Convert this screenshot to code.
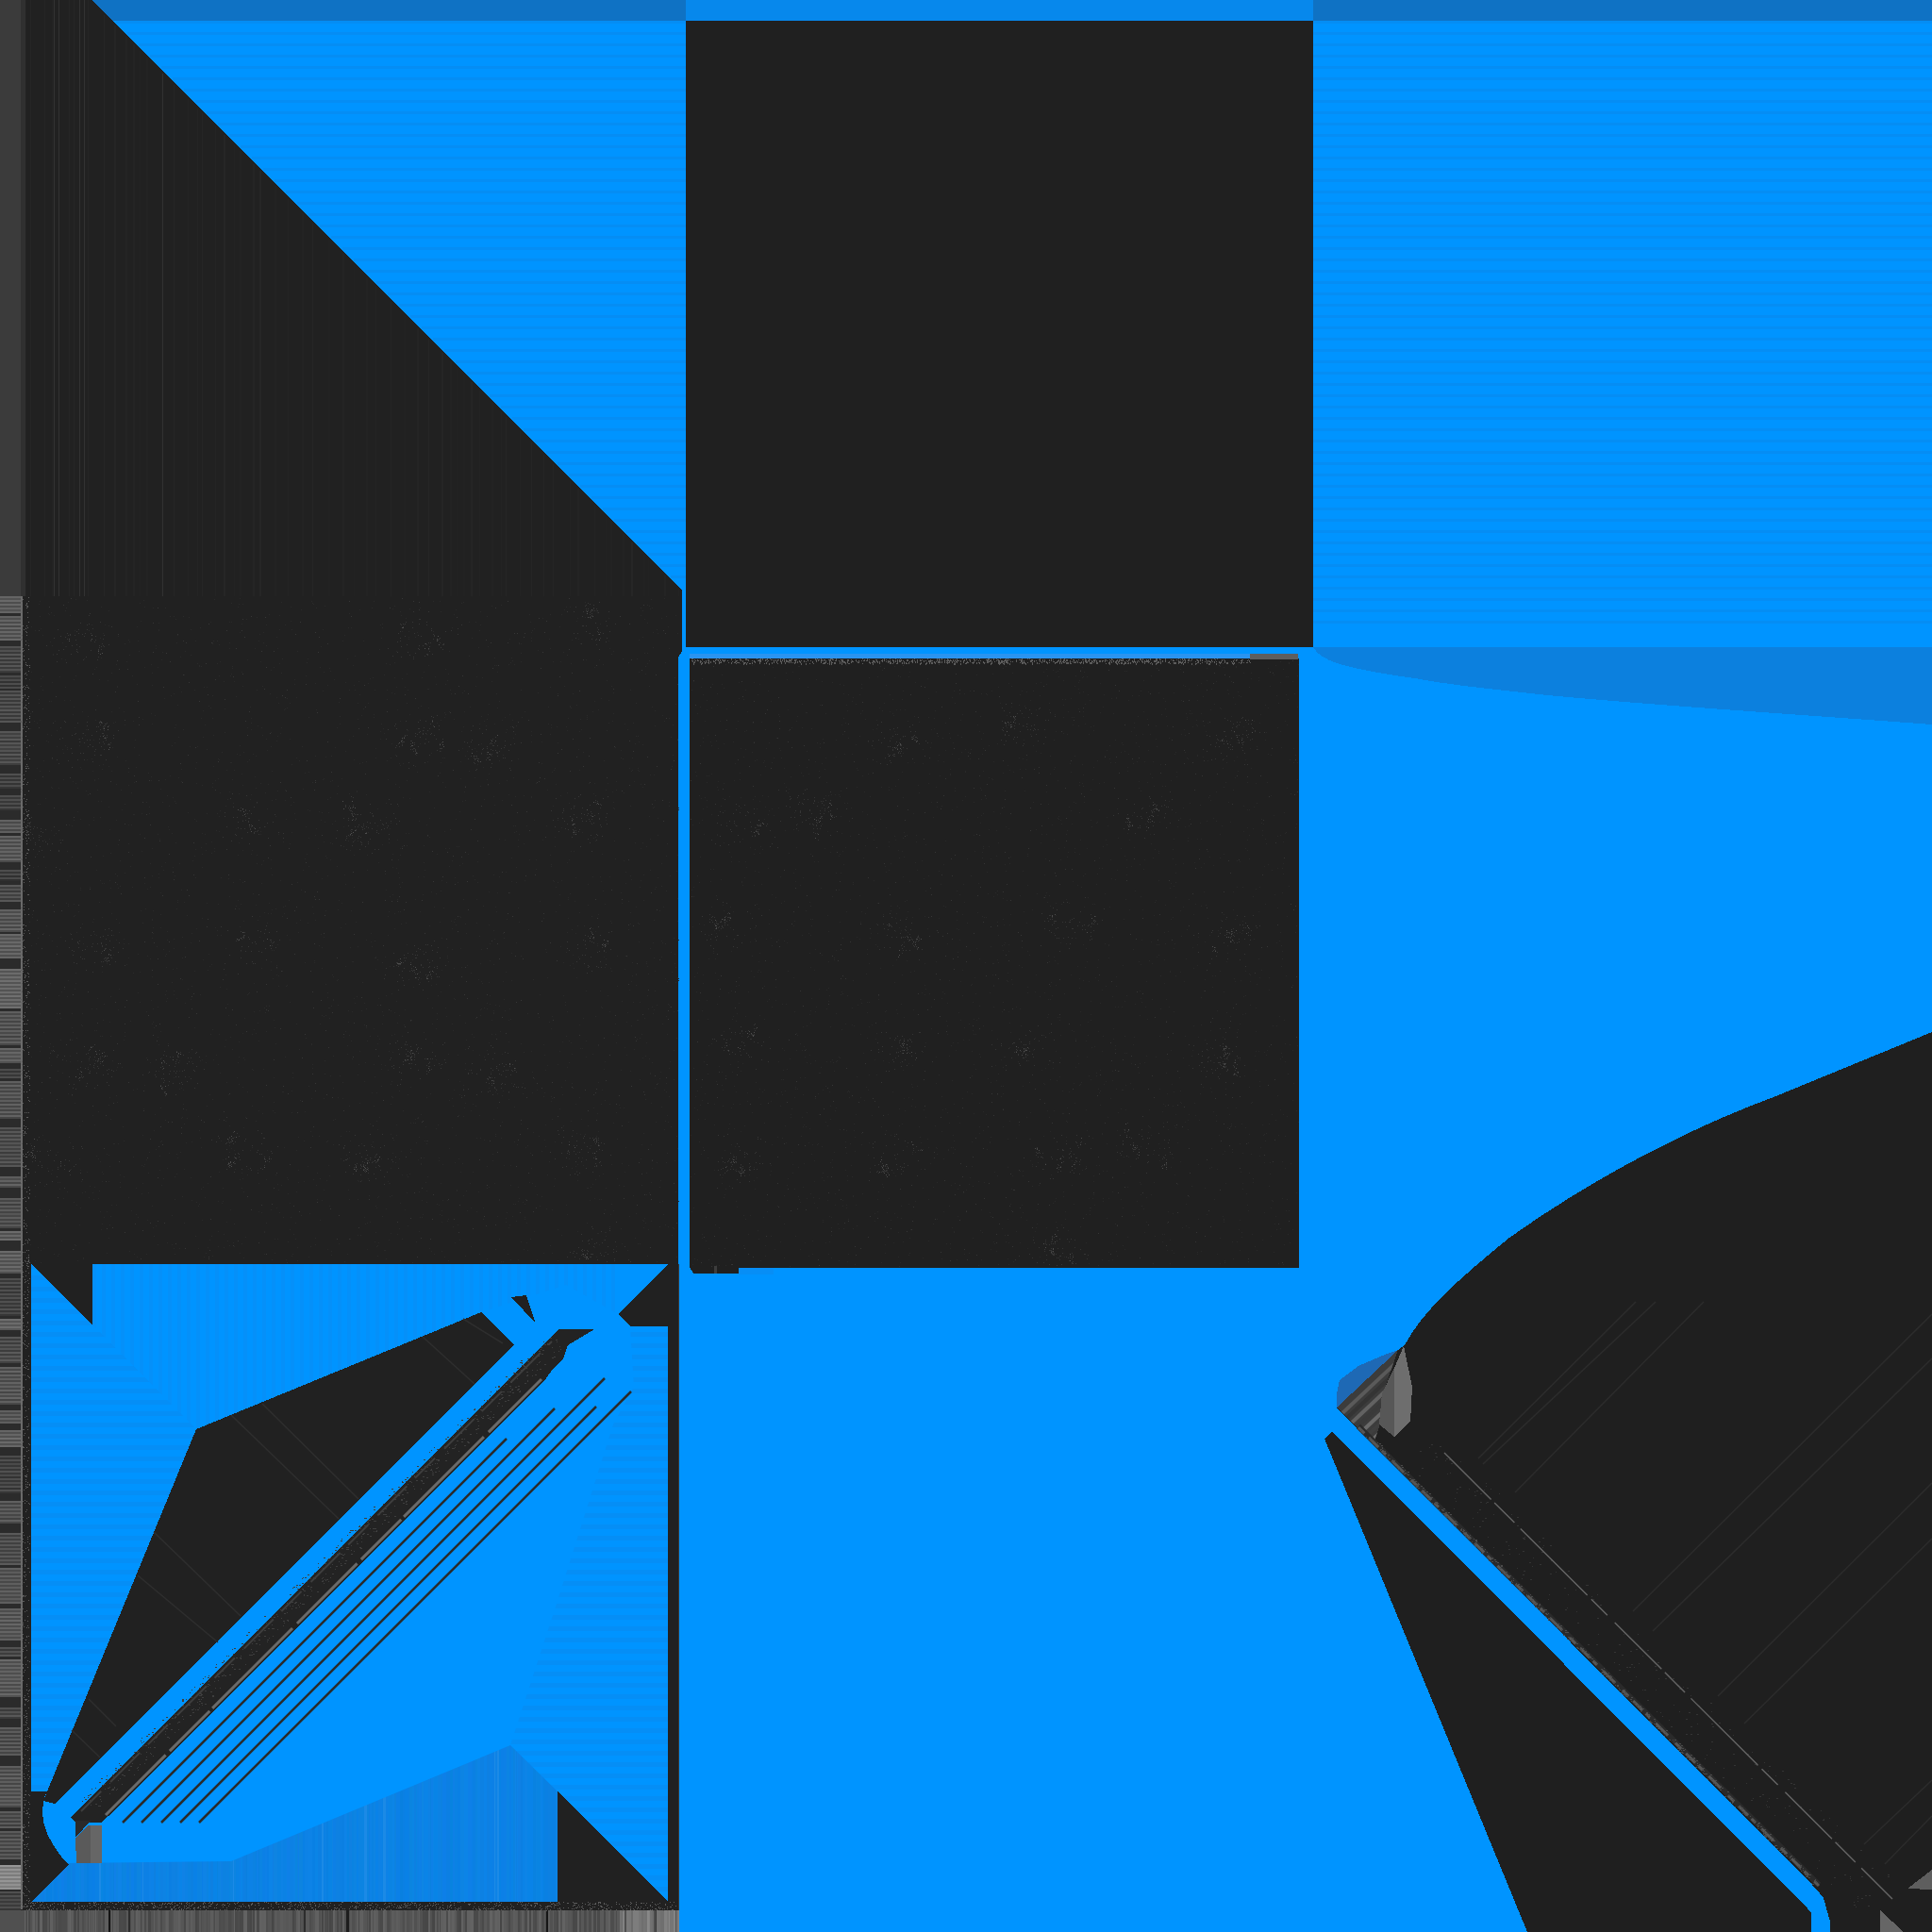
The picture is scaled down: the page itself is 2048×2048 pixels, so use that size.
const BLUE = "#0094ff";
const DARK = "#212121";

// small seeded generator so the texture noise stays the same on every render
const makeRandom = (seed: number) => () => {
    seed = (seed * 1664525 + 1013904223) % 4294967296;
    return seed / 4294967296;
};

const speck = (x: number, y: number, w = 1, h = 1) =>
    `M${Math.round(x)} ${Math.round(y)}h${w}v${h}h-${w}z`;

type Box = { x: number; y: number; w: number; h: number };

const scatter = (seed: number, box: Box, spots: number[][], loose: number) => {
    const rand = makeRandom(seed);
    let faint = "";
    let soft = "";
    let bright = "";
    const inside = (x: number, y: number) =>
        x > box.x && x < box.x + box.w - 1 && y > box.y && y < box.y + box.h - 1;
    for (let i = 0; i < loose; i++) {
        const x = box.x + rand() * box.w;
        const y = box.y + rand() * box.h;
        if (i % 5 === 0) soft += speck(x, y);
        else faint += speck(x, y);
    }
    spots.forEach(([cx, cy]) => {
        // every patch is a fuzzy cloud with a couple of short scratches in it
        const cloud = 30 + rand() * 30;
        for (let i = 0; i < cloud; i++) {
            const x = cx + (rand() + rand() - 1) * 38;
            const y = cy + (rand() + rand() - 1) * 30;
            if (inside(x, y)) soft += speck(x, y);
        }
        const scratches = 2 + Math.round(rand() * 2);
        for (let s = 0; s < scratches; s++) {
            const sx = cx + (rand() - 0.5) * 44;
            const sy = cy + (rand() - 0.5) * 36;
            const angle = 0.7 + rand() * 1.6;
            const length = 8 + rand() * 14;
            const count = 7 + rand() * 10;
            for (let i = 0; i < count; i++) {
                const t = (rand() - 0.5) * length;
                const x = sx + t * Math.cos(angle) + (rand() - 0.5) * 6;
                const y = sy + t * Math.sin(angle) + (rand() - 0.5) * 6;
                if (!inside(x, y)) continue;
                if (i % 4 === 0) bright += speck(x, y);
                else soft += speck(x, y);
            }
        }
    });
    return { faint, soft, bright };
};

// specks along a diagonal band, used for the worn seams
const alongBand = (seed: number, x1: number, y1: number, x2: number, y2: number, width: number, count: number) => {
    const rand = makeRandom(seed);
    let d = "";
    const len = Math.hypot(x2 - x1, y2 - y1);
    const nx = -(y2 - y1) / len;
    const ny = (x2 - x1) / len;
    for (let i = 0; i < count; i++) {
        const t = rand();
        const o = (rand() - 0.5) * width;
        d += speck(x1 + (x2 - x1) * t + nx * o, y1 + (y2 - y1) * t + ny * o, 1 + Math.round(rand()), 1);
    }
    return d;
};

const scaled = (points: number[][]) => points.map(([x, y]) => [x * 1.306, y * 1.306]);

const leftNoise = scatter(
    11,
    { x: 27, y: 634, w: 692, h: 704 },
    scaled([[70, 515], [340, 515], [480, 505], [70, 600], [340, 600], [400, 605], [30, 680], [200, 665], [300, 670], [470, 665], [75, 770], [205, 770], [340, 780], [475, 770], [70, 865], [140, 870], [340, 860], [400, 870], [40, 945], [200, 935], [300, 940], [470, 935], [480, 1020]]),
    3600
);

const centreNoise = scatter(
    23,
    { x: 732, y: 700, w: 644, h: 642 },
    scaled([[730, 600], [830, 590], [1000, 600], [600, 670], [660, 660], [930, 660], [590, 750], [730, 760], [870, 750], [1000, 760], [600, 850], [730, 855], [830, 850], [990, 860], [600, 940], [730, 940], [860, 940], [930, 930], [860, 1018]]),
    3200
);

const buildLeftRows = () => {
    const rand = makeRandom(5);
    const rows: { y: number; h: number; c: string }[] = [];
    let y = 632;
    while (y < 2025) {
        const band = 8 + rand() * 36;
        const lightBand = y > 1962 && y < 1992;
        const base = lightBand ? 130 : 56 + rand() * 40;
        for (let r = 0; r < band && y < 2025; r += 2) {
            const v = Math.round(base + (r % 4 === 0 ? 14 : -10) + rand() * 8);
            rows.push({ y, h: 2, c: `rgb(${v},${v},${v})` });
            y += 2;
        }
        const gap = 2 + Math.round(rand() * 9);
        rows.push({ y, h: gap, c: "#2b2b2b" });
        y += gap;
    }
    return rows;
};

const buildBottomColumns = () => {
    const rand = makeRandom(9);
    const cols: { x: number; w: number; c: string }[] = [];
    let x = 26;
    while (x < 720) {
        const w = 1 + Math.round(rand() * 2);
        const boost = x > 655 ? 36 : 0;
        const dip = rand() < 0.03 ? -50 : 0;
        const v = Math.round(70 + rand() * 30 + boost + dip);
        cols.push({ x, w, c: `rgb(${v},${v},${v})` });
        x += w;
    }
    return cols;
};

const buildSideLines = () => {
    const rand = makeRandom(31);
    const lines: { x: number; w: number; c: string }[] = [];
    for (let x = 27; x < 722; x += 4 + Math.round(rand() * 14)) {
        const v = Math.round(34 + rand() * 4);
        lines.push({ x, w: 1 + Math.round(rand()), c: `rgb(${v},${v},${v})` });
    }
    [57, 62, 84, 89, 172].forEach((x) => lines.push({ x, w: 1, c: "#323232" }));
    return lines;
};

const buildShadeColumns = () => {
    const rand = makeRandom(17);
    const cols: { x: number; w: number; c: string }[] = [];
    for (let x = 33; x < 591; ) {
        const w = 1 + Math.round(rand() * 3);
        const light = rand() < 0.03;
        const r = light ? 28 : Math.round(8 + rand() * 7);
        const g = light ? 138 : Math.round(127 + rand() * 6);
        const b = light ? 230 : Math.round(224 + rand() * 8);
        cols.push({ x, w, c: `rgb(${r},${g},${b})` });
        x += w;
    }
    return cols;
};

const sideRows = buildLeftRows();
const bottomColumns = buildBottomColumns();
const sideLines = buildSideLines();
const shadeColumns = buildShadeColumns();

const horizontalBands = Array.from({ length: 110 }, (_, i) => 22 + i * 6).filter((_, i) => i % 2 === 0);
const boxBands = Array.from({ length: 58 }, (_, i) => 1340 + i * 12);
const boxColumns = Array.from({ length: 56 }, (_, i) => 98 + i * 10);

const edgeSpecks = (() => {
    const rand = makeRandom(77);
    let d = "";
    for (let i = 0; i < 900; i++) d += speck(22 + rand() * 9, 632 + rand() * 1390);
    for (let i = 0; i < 900; i++) d += speck(26 + rand() * 694, 2016 + rand() * 9);
    for (let i = 0; i < 900; i++) d += speck(732 + rand() * 593, 698 + rand() * 5, 1, 1 + Math.round(rand()));
    return d;
})();

const smallStripNoise = alongBand(41, 92, 1915, 590, 1420, 22, 650);
const bigStripNoise = alongBand(42, 1440, 1512, 1926, 1998, 6, 500);
const bigStripDust = alongBand(43, 1500, 1530, 1990, 2010, 50, 240);

const kiteLines = [
    [245, 1500, 359, 1610], [278, 1488, 380, 1589], [448, 1417, 503, 1467], [491, 1398, 533, 1424],
    [163, 1624, 255, 1713], [146, 1670, 231, 1741], [94, 1801, 123, 1830], [76, 1834, 106, 1863],
];

const harpLines = [
    [537, 1525, 130, 1932], [588, 1493, 150, 1932], [641, 1461, 171, 1932],
    [632, 1491, 191, 1932], [669, 1475, 211, 1932],
];

const bigLines = [
    [1567, 1546, 1734, 1380], [1572, 1552, 1755, 1380], [1606, 1582, 1806, 1380],
    [1731, 1708, 2048, 1393], [1752, 1729, 2048, 1440], [1821, 1798, 2048, 1572],
    [1849, 1827, 2048, 1631], [1976, 1955, 2048, 1887], [1998, 1976, 2048, 1925],
];

// grey ribs inside the small wedge next to the bright cap
const wedgeRibs: [number, string][] = [
    [6, "#5a5a5a"], [11, "#343434"], [16, "#626262"], [21, "#3a3a3a"], [26, "#6a6a6a"],
    [31, "#3f3f3f"], [36, "#6e6e6e"], [41, "#444444"], [46, "#707070"], [51, "#4b4b4b"],
];

export default function App() {
    return (
        <div className="w-[2048px] h-[2048px] overflow-hidden bg-[#0094ff]">
            <svg className="block" width={2048} height={2048} viewBox="0 0 2048 2048" shapeRendering="crispEdges">
                <defs>
                    <clipPath id="shade">
                        <polygon points="33,2016 71,1975 245,1973 541,1850 591,1899 591,2016" />
                    </clipPath>
                    <clipPath id="boxLeft">
                        <polygon points="33,1340 98,1404 208,1515 50,1899 33,1899" />
                    </clipPath>
                    <clipPath id="boxRight">
                        <polygon points="668,1406 708,1406 708,2016 591,1899 541,1850 590,1700 650,1510 672,1470" />
                    </clipPath>
                    <clipPath id="boxTop">
                        <polygon points="98,1340 708,1340 655,1393 600,1362 510,1391 208,1515 98,1404" />
                    </clipPath>
                    <clipPath id="wedge">
                        <polygon points="1417,1492 1482,1431 1465,1480 1462,1513 1456,1530" />
                    </clipPath>
                </defs>

                <rect width={2048} height={2048} fill={BLUE} />

                {/* stripes in the blue top panels */}
                {horizontalBands.map((y) => (
                    <rect key={y} x={1392} y={y} width={656} height={3} fill="#058df4" />
                ))}
                <rect x={1392} y={670} width={656} height={16} fill={BLUE} />

                {/* top bar */}
                <rect x={97} y={0} width={630} height={22} fill="#0f72c4" />
                <rect x={727} y={0} width={665} height={22} fill="#0788ec" />
                <rect x={1392} y={0} width={656} height={22} fill="#0f72c4" />

                {/* darker sweep under the top right panel */}
                <path d="M1392 686L2048 686L2048 768C1900 757 1760 748 1640 737C1590 731 1540 727 1500 719C1470 715 1440 710 1420 704C1405 699 1396 694 1392 686Z" fill="#0c80de" />

                {/* left column, solid top and texture below */}
                <polygon points="0,0 97,0 723,625 723,690 719,697 719,2048 0,2048" fill={DARK} />
                {sideLines.map((l) => {
                    // faint streaks stop at the diagonal edge of the blue triangle
                    const top = l.x > 97 ? l.x - 94 : 0;
                    return <rect key={l.x + l.c} x={l.x} y={top} width={l.w} height={632 - top} fill={l.c} />;
                })}
                <polygon points="119,22 727,22 727,629" fill={BLUE} />
                {horizontalBands.filter((y) => y < 620).map((y) => (
                    <rect key={y} x={y + 101} y={y} width={626 - y} height={3} fill="#058df4" />
                ))}
                <rect x={723} y={625} width={4} height={65} fill={BLUE} />

                <rect x={0} y={0} width={22} height={632} fill="#3b3b3b" />
                <rect x={22} y={0} width={5} height={632} fill="#303030" />
                {sideRows.map((r) => (
                    <rect key={r.y} x={0} y={r.y} width={22} height={r.h} fill={r.c} />
                ))}
                <rect x={22} y={632} width={2} height={1392} fill="#6a6a6a" />
                <path d={leftNoise.faint} fill="#2a2a2a" />
                <path d={leftNoise.soft} fill="#363636" />
                <path d={leftNoise.bright} fill="#4e4e4e" />

                {/* top centre square */}
                <rect x={727} y={22} width={665} height={664} fill="#202020" />

                {/* centre texture */}
                <polygon points="731,698 1377,698 1377,1344 783,1344 783,1350 735,1350 731,1343" fill="#202020" />
                <rect x={731} y={693} width={594} height={5} fill="#2a94f0" />
                <rect x={1325} y={693} width={51} height={6} fill="#5e5e5e" />
                <path d={centreNoise.faint} fill="#292929" />
                <path d={centreNoise.soft} fill="#353535" />
                <path d={centreNoise.bright} fill="#4c4c4c" />
                <rect x={757} y={1342} width={3} height={8} fill="#3d3d3d" />
                <rect x={783} y={1344} width={37} height={7} fill="#078ef6" />

                {/* bottom left block */}
                <rect x={33} y={1340} width={675} height={676} fill={BLUE} />
                <g clipPath="url(#boxLeft)">
                    {boxBands.map((y) => (
                        <rect key={y} x={33} y={y} width={180} height={5} fill="#058ef6" />
                    ))}
                </g>
                <g clipPath="url(#boxRight)">
                    {boxBands.map((y) => (
                        <rect key={y} x={540} y={y} width={168} height={5} fill="#058ef6" />
                    ))}
                </g>
                <g clipPath="url(#boxTop)">
                    {boxColumns.map((x) => (
                        <rect key={x} x={x} y={1340} width={4} height={180} fill="#0590f9" />
                    ))}
                </g>
                <g clipPath="url(#shade)">
                    {shadeColumns.map((c) => (
                        <rect key={c.x} x={c.x} y={1840} width={c.w} height={180} fill={c.c} />
                    ))}
                </g>
                <polygon points="33,1340 98,1340 98,1404" fill={DARK} />
                <polygon points="708,1340 655,1393 668,1406 708,1406" fill={DARK} />
                <polygon points="591,1899 708,2016 591,2016" fill={DARK} />
                <path d="M33 1899L50 1899C45 1905 44 1925 47 1935C50 1948 62 1966 73 1977L33 2016Z" fill={DARK} />
                <polygon points="208,1515 510,1391 545,1425 58,1912 46,1909 50,1899" fill={DARK} />
                <polygon points="542,1375 558,1373 568,1403" fill={DARK} />
                {kiteLines.map(([x1, y1, x2, y2]) => (
                    <line key={x1} x1={x1} y1={y1} x2={x2} y2={y2} stroke="#2e2e2e" strokeWidth={1.5} shapeRendering="auto" />
                ))}

                {/* the long narrow strip with its grey seam */}
                <polygon points="592,1409 630,1409 602,1426 597,1441 587,1450 576,1465 108,1932 80,1932 75,1926" fill="#232323" />
                <path d={smallStripNoise} fill="#3e3e3e" />
                <line x1={112} y1={1924} x2={574} y2={1462} stroke="#6a6a6a" strokeWidth={3} strokeDasharray="90 6 60 4 120 7" shapeRendering="auto" />
                <line x1={86} y1={1920} x2={585} y2={1422} stroke="#3e3e3e" strokeWidth={2} strokeDasharray="30 14 44 12" shapeRendering="auto" />
                {harpLines.map(([x1, y1, x2, y2]) => (
                    <line key={x1} x1={x1} y1={y1} x2={x2} y2={y2} stroke="#2a2a2a" strokeWidth={2.5} shapeRendering="auto" />
                ))}
                <polygon points="80,1930 96,1930 80,1948" fill="#2a2a2a" />
                <polygon points="80,1948 94,1935 108,1935 107,1975 81,1975" fill="#5a5a5a" />
                <rect x={96} y={1935} width={12} height={40} fill="#666666" />

                {/* bottom band */}
                <rect x={719} y={1340} width={1} height={708} fill="#3a3a3a" />
                <rect x={0} y={2025} width={26} height={23} fill="#505050" />
                {bottomColumns.map((c) => (
                    <rect key={c.x} x={c.x} y={2025} width={c.w} height={23} fill={c.c} />
                ))}
                <path d={edgeSpecks} fill="#5c5c5c" />

                {/* bottom right shape */}
                <path d="M1489 1426C1510 1385 1560 1345 1600 1312C1680 1255 1780 1200 1880 1163L2048 1094L2048 2048L1940 2048L1940 2037L1933 2012L1925 2002L1417 1492L1482 1431Z" fill="#1f1f1f" />
                <polygon points="1417,1492 1417,1478 1420,1463 1440,1448 1470,1435 1482,1431" fill="#1e69b5" />
                <polygon points="1417,1492 1482,1431 1465,1480 1462,1513 1456,1530" fill="#3c3c3c" />
                <g clipPath="url(#wedge)" shapeRendering="auto">
                    {wedgeRibs.map(([o, c]) => (
                        <line key={o} x1={1417 + o} y1={1492 + o} x2={1482 + o} y2={1431 + o} stroke={c} strokeWidth={4} />
                    ))}
                </g>
                <polygon points="1488,1427 1497,1470 1495,1507 1478,1523 1478,1450" fill="#6e6e6e" />
                <polygon points="1478,1450 1478,1523 1462,1510 1465,1477" fill="#575757" />
                {bigLines.map(([x1, y1, x2, y2]) => (
                    <line key={x1 + y1} x1={x1} y1={y1} x2={x2} y2={y2} stroke="#2c2c2c" strokeWidth={1.5} shapeRendering="auto" />
                ))}
                <line x1={1440} y1={1512} x2={1928} y2={1998} stroke="#2a2a2a" strokeWidth={6} shapeRendering="auto" />
                <line x1={1440} y1={1513} x2={1928} y2={1999} stroke="#565656" strokeWidth={3} strokeDasharray="9 7 14 5 6 9 18 11" shapeRendering="auto" />
                <path d={bigStripNoise} fill="#4a4a4a" />
                <path d={bigStripDust} fill="#343434" />
                <line x1={1531} y1={1540} x2={2006} y2={2013} stroke="#666666" strokeWidth={1.4} strokeDasharray="70 5 30 9 100 6 24 11" shapeRendering="auto" />
                <polygon points="2022,2002 2048,1982 2048,2003" fill="#5e5e5e" />
                <polygon points="1993,2025 2018,2048 1993,2048" fill="#666666" />

                {/* lower wedge below the blue diagonal */}
                <polygon points="1404,1525 1412,1517 1920,2027 1920,2048 1619,2048" fill="#1f1f1f" />
            </svg>
        </div>
    );
}
